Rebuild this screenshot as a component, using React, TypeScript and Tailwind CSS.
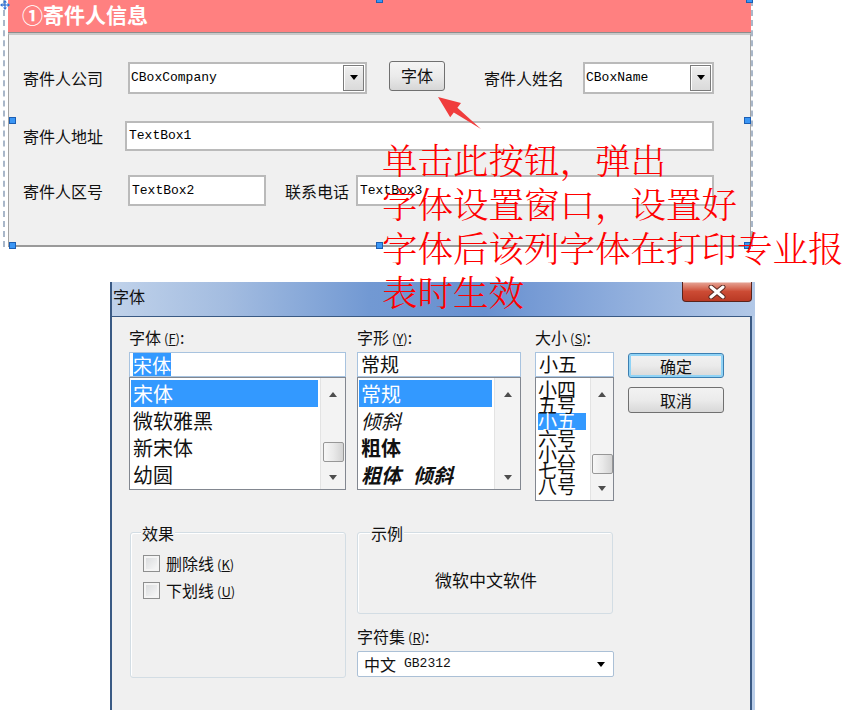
import React from "react";

const mono = "font-['Liberation_Mono','Noto_Sans_CJK_SC',monospace]";

function Tri({ up = false, dark = false }: { up?: boolean; dark?: boolean }) {
  return up ? (
    <span className={`block h-0 w-0 border-x-[4px] border-b-[5px] border-x-transparent ${dark ? "border-b-black" : "border-b-[#4d4d4d]"}`} />
  ) : (
    <span className={`block h-0 w-0 border-x-[4px] border-t-[5px] border-x-transparent ${dark ? "border-t-black" : "border-t-[#4d4d4d]"}`} />
  );
}

function DropBtn() {
  return (
    <div className="flex h-[26px] w-[21px] items-center justify-center border border-[#7b7b7b] bg-gradient-to-b from-[#efefef] to-[#dadada] shadow-[inset_1px_1px_0_#ffffff]">
      <Tri dark />
    </div>
  );
}

function Combo({ text, className }: { text: string; className: string }) {
  return (
    <div className={`flex h-[32px] items-center justify-between border-2 border-[#bababa] bg-white pl-[1px] pr-[1px] ${className}`}>
      <span className={`${mono} text-[13px] text-black`}>{text}</span>
      <DropBtn />
    </div>
  );
}

function TextBox({ text, className }: { text: string; className: string }) {
  return (
    <div className={`flex items-center border-2 border-[#bababa] bg-white pl-[2px] ${className}`}>
      <span className={`${mono} text-[13px] text-black`}>{text}</span>
    </div>
  );
}

function Handle({ className }: { className: string }) {
  return <div className={`absolute h-[7px] w-[7px] border border-[#1c5fb4] bg-[#3a96f5] ${className}`} />;
}

function VScroll({ className, thumb }: { className: string; thumb?: string }) {
  return (
    <div className={`flex h-full shrink-0 flex-col items-center border-l border-[#e3e3e3] bg-[#f3f3f3] ${className}`}>
      <div className="flex h-[32px] w-full shrink-0 items-center justify-center">
        <Tri up />
      </div>
      {thumb && (
        <div className={`h-[20px] w-[21px] shrink-0 rounded-[2px] border border-[#979797] bg-gradient-to-r from-[#f7f7f7] via-[#e9e9e9] to-[#d3d3d3] ${thumb}`} />
      )}
      <div className="flex-1" />
      <div className="flex h-[24px] w-full shrink-0 items-center justify-center">
        <Tri />
      </div>
    </div>
  );
}

function Key({ k }: { k: string }) {
  return (
    <span className="ml-[3px] text-[13px]">
      (<span className="underline">{k}</span>)
    </span>
  );
}

function FieldLabel({ children }: { children: React.ReactNode }) {
  return <div className="h-[20px] text-[16px] leading-[20px] whitespace-nowrap">{children}</div>;
}

function Check({ label, k }: { label: string; k: string }) {
  return (
    <div className="flex h-[17px] items-center gap-[6px]">
      <span className="block h-[17px] w-[17px] border border-[#8e8f8f] bg-gradient-to-br from-[#d6d8da] to-[#fbfbfb] shadow-[inset_0_0_0_2px_#f4f4f4]" />
      <span className="text-[16px] leading-[17px] whitespace-nowrap">
        {label}
        <Key k={k} />
      </span>
    </div>
  );
}

export default function App() {
  return (
    <div className="relative h-[711px] w-[847px] overflow-hidden bg-white font-['Noto_Sans_CJK_SC','Noto_Sans',sans-serif] text-black">
      {/* move handle */}
      <svg className="absolute left-0 top-0 z-10" width="10" height="10" viewBox="0 0 10 10">
        <path d="M5 0 L7 2.5 H5.6 V4.4 H7.5 V3 L10 5 L7.5 7 V5.6 H5.6 V7.5 H7 L5 10 L3 7.5 H4.4 V5.6 H2.5 V7 L0 5 L2.5 3 V4.4 H4.4 V2.5 H3 Z" fill="#2f6fd6" />
      </svg>

      {/* designer panel */}
      <div className="relative ml-[3px] w-[750px] border-x-2 border-dashed border-[#a9b7c9] pl-[3px]">
        <div className="w-[743px]">
          <div className="flex h-[33px] items-center border-b border-[#8c8c8c] bg-[#ff8080] pb-[3px] pl-[14px] text-[21px] font-bold text-white">
            ①寄件人信息
          </div>
          <div className="border-x border-b-2 border-t-[2px] border-x-[#a3a3a3] border-b-[#9a9a9a] border-t-[#c9c9c9] bg-[#f0f0f0] pb-[39px] pl-[14px] pt-[26px] text-[16px] text-[#111]">
            <div className="flex h-[33px] items-center">
              <span className="w-[105px]">寄件人公司</span>
              <Combo text="CBoxCompany" className="w-[239px]" />
              <div className="ml-[22px] flex h-[30px] w-[56px] items-center justify-center self-start rounded-[3px] border border-[#707070] bg-gradient-to-b from-[#f4f4f4] via-[#ebebeb] to-[#d6d6d6] pb-[2px] text-[16px]">
                字体
              </div>
              <span className="ml-[39px] w-[99px]">寄件人姓名</span>
              <Combo text="CBoxName" className="w-[131px]" />
            </div>
            <div className="mt-[27px] flex h-[30px] items-center">
              <span className="w-[102px]">寄件人地址</span>
              <TextBox text="TextBox1" className="h-[30px] w-[589px]" />
            </div>
            <div className="mt-[24px] flex h-[31px] items-center">
              <span className="w-[105px]">寄件人区号</span>
              <TextBox text="TextBox2" className="h-[31px] w-[138px]" />
              <span className="ml-[19px] w-[71px]">联系电话</span>
              <TextBox text="TextBox3" className="h-[31px] w-[358px]" />
            </div>
          </div>
        </div>
        <Handle className="left-[371px] top-[-4px]" />
        <Handle className="left-[741px] top-[-4px]" />
        <Handle className="left-[4px] top-[117px]" />
        <Handle className="left-[739px] top-[117px]" />
        <Handle className="left-[4px] top-[242px]" />
        <Handle className="left-[371px] top-[242px]" />
        <Handle className="left-[739px] top-[242px]" />
      </div>

      {/* font dialog */}
      <div className="relative ml-[110px] mt-[35px] flex h-[428px] w-[645px] flex-col border-l-2 border-[#3a5a84] bg-[#b9cde8]">
        <div className="h-[34px] shrink-0 bg-[linear-gradient(90deg,#c0d2ea_0%,#a3bce0_18%,#7299d3_40%,#6890d0_58%,#8dacdc_78%,#b2c8e7_100%)] pl-[1px] pt-[4px] text-[16px] leading-[20px] text-[#111]">
          字体
        </div>
        <div className="absolute right-[3px] top-0 flex h-[20px] w-[70px] items-center justify-center rounded-b-[4px] border border-t-0 border-[#5a231b] bg-gradient-to-b from-[#e6a698] via-[#cc4b34] to-[#b93924] shadow-[inset_0_1px_0_rgba(255,255,255,0.45)]">
          <svg width="20" height="14" viewBox="0 0 20 14">
            <path d="M4 2 L16 12 M16 2 L4 12" stroke="#5a2a22" strokeWidth="5" strokeLinecap="round" />
            <path d="M4 2 L16 12 M16 2 L4 12" stroke="#ffffff" strokeWidth="3" strokeLinecap="round" />
          </svg>
        </div>

        <div className="mr-[3px] flex-1 border-r-2 border-t border-[#3a5a84] bg-[#f0f0f0] text-[#111]">
          <div className="flex pl-[17px] pt-[10px]">
            {/* font family */}
            <div className="w-[217px]">
              <FieldLabel>
                字体<Key k="F" />:
              </FieldLabel>
              <div className="mt-[5px] flex h-[25px] items-center border border-[#a8c3df] bg-white pl-[3px]">
                <span className="bg-[#3399ff] text-[19px] leading-[23px] text-white">宋体</span>
              </div>
              <div className="flex h-[113px] border border-[#828790] bg-white">
                <div className="flex-1 pl-[1px] pr-[2px] pt-[2px] text-[20px] leading-[27px]">
                  <div className="h-[27px] bg-[#3399ff] pl-[2px] text-white">宋体</div>
                  <div className="h-[27px] pl-[2px]">微软雅黑</div>
                  <div className="h-[27px] pl-[2px]">新宋体</div>
                  <div className="h-[27px] pl-[2px]">幼圆</div>
                </div>
                <VScroll className="w-[25px]" thumb="mt-[32px]" />
              </div>
            </div>

            {/* font style */}
            <div className="ml-[11px] w-[164px]">
              <FieldLabel>
                字形<Key k="Y" />:
              </FieldLabel>
              <div className="mt-[5px] flex h-[25px] items-center border border-[#a8c3df] bg-white pl-[3px] text-[19px]">
                常规
              </div>
              <div className="flex h-[113px] border border-[#828790] bg-white">
                <div className="flex-1 pl-[1px] pr-[2px] pt-[2px] text-[20px] leading-[27px]">
                  <div className="h-[27px] bg-[#3399ff] pl-[2px] text-white">常规</div>
                  <div className="h-[27px] pl-[2px] italic">倾斜</div>
                  <div className="h-[27px] pl-[2px] font-bold">粗体</div>
                  <div className="h-[27px] whitespace-nowrap pl-[2px] font-bold italic">
                    粗体<span className="ml-[12px]">倾斜</span>
                  </div>
                </div>
                <VScroll className="w-[26px]" />
              </div>
            </div>

            {/* size */}
            <div className="ml-[14px] w-[79px]">
              <FieldLabel>
                大小<Key k="S" />:
              </FieldLabel>
              <div className="mt-[5px] flex h-[25px] items-center border border-[#a8c3df] bg-white pl-[3px] text-[19px]">
                小五
              </div>
              <div className="flex h-[124px] overflow-hidden border border-[#828790] bg-white">
                <div className="flex-1 pl-[2px] pr-[4px] pt-[3px] text-[19px] leading-[16px]">
                  <div className="h-[16px]">小四</div>
                  <div className="h-[16px]">五号</div>
                  <div className="h-[17px] bg-[#3399ff] text-white">小五</div>
                  <div className="h-[16px]">六号</div>
                  <div className="h-[16px]">小六</div>
                  <div className="h-[16px]">七号</div>
                  <div className="h-[16px]">八号</div>
                </div>
                <VScroll className="w-[23px]" thumb="mt-[44px]" />
              </div>
            </div>

            {/* buttons */}
            <div className="ml-[14px] mt-[26px] w-[96px]">
              <div className="flex h-[25px] items-center justify-center rounded-[3px] border border-[#3c7fb1] bg-gradient-to-b from-[#f2f2f2] via-[#ebebeb] to-[#d8d8d8] text-[16px] shadow-[inset_0_0_0_2px_#8fd3f6]">
                确定
              </div>
              <div className="mt-[9px] flex h-[26px] items-center justify-center rounded-[3px] border border-[#707070] bg-gradient-to-b from-[#f2f2f2] via-[#ebebeb] to-[#d8d8d8] text-[16px]">
                取消
              </div>
            </div>
          </div>

          <div className="mt-[31px] flex pl-[18px]">
            <div className="relative h-[146px] w-[216px] rounded-[3px] border border-[#d3dde4] pl-[12px] pt-[22px] shadow-[inset_1px_1px_0_#ffffff]">
              <span className="absolute -top-[10px] left-[10px] bg-[#f0f0f0] px-[1px] text-[16px] leading-[20px]">效果</span>
              <Check label="删除线" k="K" />
              <div className="mt-[10px]">
                <Check label="下划线" k="U" />
              </div>
            </div>

            <div className="ml-[11px] w-[257px]">
              <div className="relative flex h-[82px] w-[256px] items-center justify-center rounded-[3px] border border-[#d3dde4] pt-[13px] pl-[2px] shadow-[inset_1px_1px_0_#ffffff]">
                <span className="absolute -top-[10px] left-[12px] bg-[#f0f0f0] px-[1px] text-[16px] leading-[20px]">示例</span>
                <span className="text-[17px]">微软中文软件</span>
              </div>
              <div className="mt-[12px]">
                <FieldLabel>
                  字符集<Key k="R" />:
                </FieldLabel>
              </div>
              <div className="mt-[5px] flex h-[26px] items-center justify-between rounded-[2px] border border-[#abc0d6] bg-white pl-[6px] pr-[8px]">
                <span className="flex items-center gap-[8px]">
                  <span className="text-[16px]">中文</span>
                  <span className={`${mono} text-[13px]`}>GB2312</span>
                </span>
                <Tri dark />
              </div>
            </div>
          </div>
        </div>
      </div>

      {/* annotation arrow */}
      <svg className="absolute left-[430px] top-[90px] z-20" width="60" height="45" viewBox="0 0 60 45">
        <polygon points="8,7 31,12.9 27.4,17.7 51,39 23.8,22.5 20.2,27.3" fill="#f03c3c" />
      </svg>

      {/* annotation text */}
      <div className="absolute left-[382px] top-[137px] z-20 font-['Noto_Serif_CJK_SC','Noto_Sans_CJK_SC',serif] text-[35.5px] font-light leading-[44px] whitespace-nowrap text-[#ff0000]">
        <div>单击此按钮，弹出</div>
        <div>字体设置窗口，设置好</div>
        <div>字体后该列字体在打印专业报</div>
        <div>表时生效</div>
      </div>
    </div>
  );
}
